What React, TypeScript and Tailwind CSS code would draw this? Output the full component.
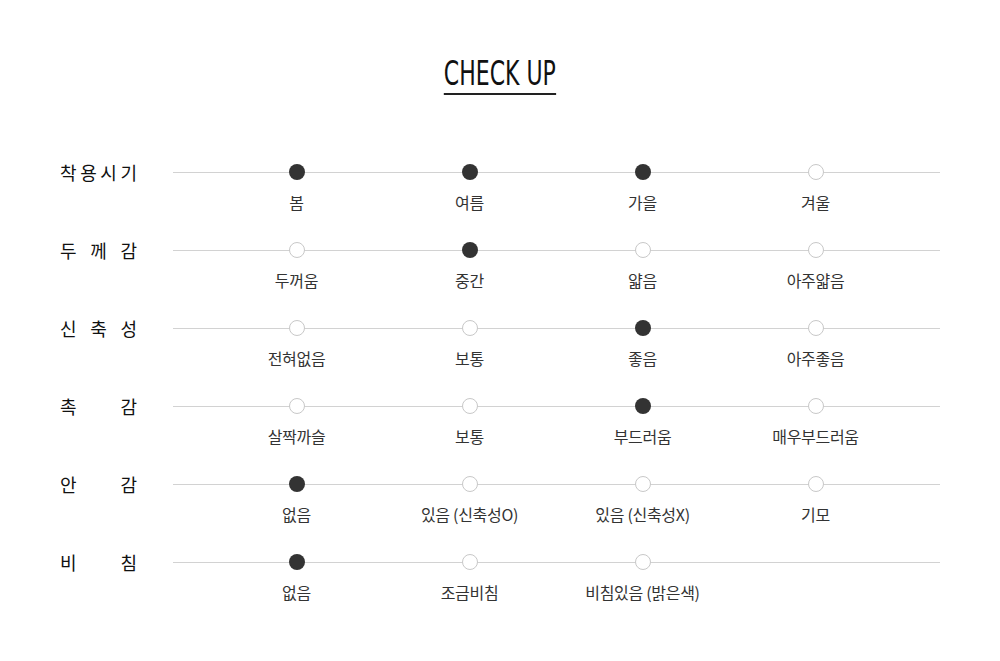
import React from 'react';

// One row of the check-up chart: a title, a line and up to four options
interface CheckRow {
  title: string;
  options: string[];
  selected: number[];
}

const rows: CheckRow[] = [
  { title: '착용시기', options: ['봄', '여름', '가을', '겨울'], selected: [0, 1, 2] },
  { title: '두께감', options: ['두꺼움', '중간', '얇음', '아주얇음'], selected: [1] },
  { title: '신축성', options: ['전혀없음', '보통', '좋음', '아주좋음'], selected: [2] },
  { title: '촉감', options: ['살짝까슬', '보통', '부드러움', '매우부드러움'], selected: [2] },
  { title: '안감', options: ['없음', '있음 (신축성O)', '있음 (신축성X)', '기모'], selected: [0] },
  { title: '비침', options: ['없음', '조금비침', '비침있음 (밝은색)'], selected: [0] },
];

const Dot: React.FC<{ on: boolean }> = ({ on }) => (
  <span
    className={`relative block w-4 h-4 rounded-full ${on ? 'bg-[#333333]' : 'bg-white border border-[#c8c8c8]'}`}
  />
);

const App: React.FC = () => {
  return (
    <div
      className="w-[1000px] h-[661px] bg-white text-[#222]"
      style={{ fontFamily: '"Noto Sans CJK KR", "Noto Sans", sans-serif' }}
    >
      {/* Title */}
      <div className="flex justify-center pt-[56px]">
        <h1
          className="text-[34px] leading-[34px] text-[#111] border-b-2 border-[#222] pb-[3px] scale-x-[0.72] origin-center whitespace-nowrap"
          style={{ fontFamily: '"Liberation Sans Narrow", "DejaVu Sans Condensed", "Liberation Sans", sans-serif' }}
        >
          CHECK UP
        </h1>
      </div>

      {/* Chart */}
      <div className="flex flex-col pl-[60px] pt-[69px]">
        {rows.map((row) => (
          <div key={row.title} className="flex h-[78px]">
            <div className="w-[77px] h-4 flex items-center justify-between text-[18px] text-[#111]">
              {row.title.split('').map((ch, i) => (
                <span key={i}>{ch}</span>
              ))}
            </div>
            <div className="ml-[36px] w-[767px]">
              <div className="relative">
                <div className="absolute left-0 right-0 top-[8px] h-px bg-[#d2d2d2]" />
                <div className="relative grid grid-cols-[repeat(4,173px)] pl-[37px]">
                  {row.options.map((opt, i) => (
                    <div key={opt} className="flex flex-col items-center">
                      <Dot on={row.selected.includes(i)} />
                      <span className="mt-[12px] text-[16px] leading-5 text-[#333] tracking-[-0.3px] whitespace-nowrap">
                        {opt}
                      </span>
                    </div>
                  ))}
                </div>
              </div>
            </div>
          </div>
        ))}
      </div>
    </div>
  );
};

export default App;
